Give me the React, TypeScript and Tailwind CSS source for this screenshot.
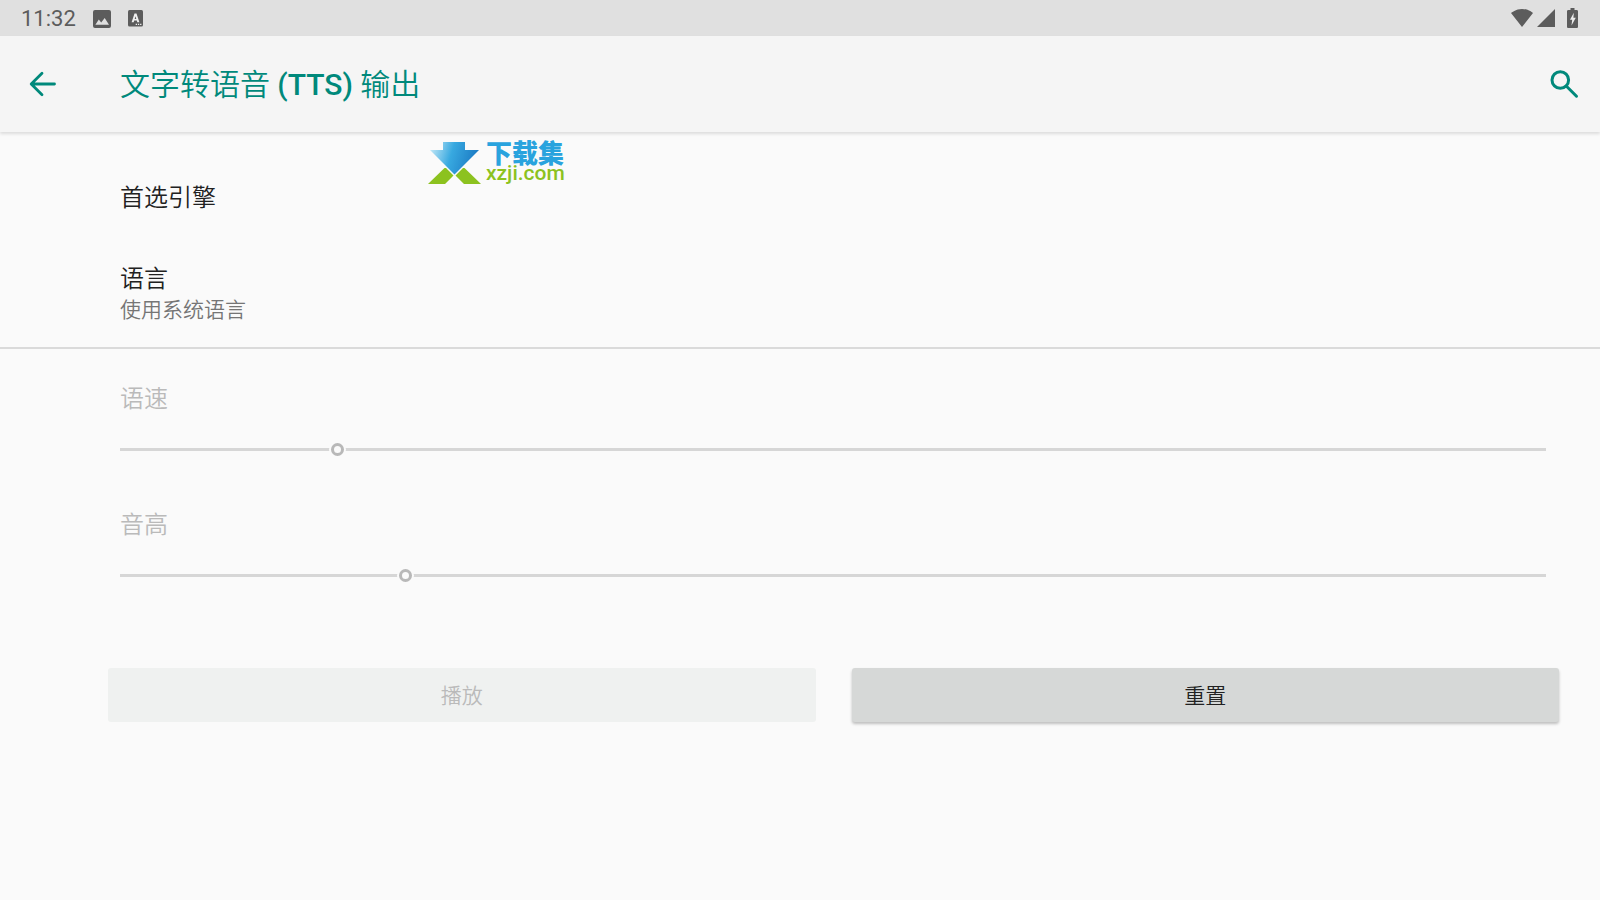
import { useState } from 'react';

type SliderRowProps = {
  id: string;
  label: string;
  value: number;
  onChange: (value: number) => void;
};

const StatusBar = () => {
  return (
    <div className="flex h-9 items-center justify-between bg-[#e0e0e0] pl-[21px] pr-[22px] text-[#5c5c5c]">
      <div className="flex items-center pt-px">
        <span className="pt-px text-[22px] leading-[34px]">11:32</span>
        <svg className="ml-[17px]" width="18" height="18" viewBox="0 0 18 18" fill="currentColor" aria-hidden="true">
          <path d="M18 16V2a2 2 0 0 0-2-2H2a2 2 0 0 0-2 2v14a2 2 0 0 0 2 2h14a2 2 0 0 0 2-2zM5.8 9.5l2.4 3.1 3.5-4.6 4.3 6.7H2.4z" />
        </svg>
        <svg className="ml-[17px]" width="15" height="17" viewBox="0 0 15 17" fill="none" aria-hidden="true">
          <rect width="15" height="16.5" rx="1.5" fill="currentColor" />
          <path
            d="M3.6 12.3 6.5 3.5h2l2.9 8.8H9.3l-.5-1.7H6.2l-.5 1.7zM6.7 9h1.6l-.8-2.7z"
            fill="#f0f0f0"
            fillRule="evenodd"
          />
          <path d="M7.7 14.3H9M9.9 14.3h1.3M12.1 14.3h1.3" stroke="#f0f0f0" strokeWidth="1.3" />
        </svg>
      </div>
      <div className="flex items-center">
        <svg width="22" height="18" viewBox="0 0 22 18" fill="currentColor" aria-hidden="true">
          <path d="M11 18 22 4.1C21.5 3.7 17.3 0 11 0S.5 3.7 0 4.1z" />
        </svg>
        <svg className="ml-1" width="18" height="18" viewBox="0 0 18 18" fill="currentColor" aria-hidden="true">
          <path d="M0 18h18V0z" />
        </svg>
        <svg className="ml-3" width="11" height="20" viewBox="0 0 11 20" aria-hidden="true">
          <path
            d="M9.7 2H7.5V0h-4v2H1.3C.6 2 0 2.6 0 3.3v15.4C0 19.4.6 20 1.3 20h8.4c.7 0 1.3-.6 1.3-1.3V3.3C11 2.6 10.4 2 9.7 2z"
            fill="currentColor"
          />
          <path d="M6.8 4.8 3 11.8h2.2l-.7 5.7 4.3-7.8H6.4z" fill="#ececec" />
        </svg>
      </div>
    </div>
  );
};

const Header = () => {
  return (
    <header className="relative z-10 flex h-24 items-center bg-[#f5f5f5] pl-7 pr-5 text-[#00897b] shadow-[0_2px_3px_rgba(0,0,0,0.12)]">
      <button type="button" aria-label="返回">
        <svg className="block" width="28" height="28" viewBox="0 0 28 28" fill="none" stroke="currentColor" strokeWidth="2.8" aria-hidden="true">
          <path d="M26.5 14H4M14 3.2 3.2 14 14 24.8" strokeLinejoin="round" strokeLinecap="round" />
        </svg>
      </button>
      <h1 className="ml-16 pt-0.5 text-[30px] font-[350] leading-10">
        文字转语音 <span className="font-medium">(TTS)</span> 输出
      </h1>
      <button type="button" aria-label="搜索" className="ml-auto">
        <svg className="block" width="30" height="30" viewBox="0 0 30 30" fill="none" stroke="currentColor" strokeWidth="3" aria-hidden="true">
          <circle cx="10.3" cy="11" r="8.3" />
          <path d="M16.5 17.2 26.5 27.2" strokeLinecap="round" />
        </svg>
      </button>
    </header>
  );
};

const Logo = () => {
  return (
    <div className="absolute left-[428px] top-[9px] flex">
      <svg width="53" height="44" viewBox="0 0 53 44" aria-hidden="true">
        <defs>
          <linearGradient id="arrow" x1="0" y1="0.2" x2="1" y2="0.4">
            <stop offset="0" stopColor="#c4e8f7" />
            <stop offset="0.45" stopColor="#38a9e0" />
            <stop offset="1" stopColor="#1a78c2" />
          </linearGradient>
        </defs>
        <path d="M15 1h22v8h14L26.5 33.5 2 9h13z" fill="url(#arrow)" />
        <path d="M0 43 16.5 27H18l7.5 7.5L17 43zM53 43 36.5 27H35l-7.5 7.5L36 43z" fill="#8cc21f" />
      </svg>
      <div className="ml-[5px]">
        <div className="text-[26px] font-black leading-[27px] text-[#29a3de]">下载集</div>
        <div className="text-[21px] font-medium leading-[10px] text-[#8cc21f]">xzji.com</div>
      </div>
    </div>
  );
};

const SliderRow = ({ id, label, value, onChange }: SliderRowProps) => {
  return (
    <div className="pb-3 pl-[120px] pr-[54px] pt-8">
      <label htmlFor={id} className="block text-[24px] leading-9 text-[#bababa]">
        {label}
      </label>
      <input
        id={id}
        type="range"
        min={0}
        max={10000}
        value={value}
        onChange={(e) => onChange(Number(e.target.value))}
        disabled
        className="mt-[19px] block h-[27px] w-full appearance-none bg-transparent [&::-webkit-slider-runnable-track]:h-[3px] [&::-webkit-slider-runnable-track]:bg-[#d6d6d6] [&::-webkit-slider-thumb]:-mt-[5px] [&::-webkit-slider-thumb]:size-[13px] [&::-webkit-slider-thumb]:appearance-none [&::-webkit-slider-thumb]:rounded-full [&::-webkit-slider-thumb]:border-[3px] [&::-webkit-slider-thumb]:border-solid [&::-webkit-slider-thumb]:border-[#b8b8b8] [&::-webkit-slider-thumb]:bg-[#fafafa] [&::-webkit-slider-thumb]:shadow-[0_0_0_2px_#fafafa]"
      />
    </div>
  );
};

const App = () => {
  const [rate, setRate] = useState(1494);
  const [pitch, setPitch] = useState(1977);

  const onReset = () => {
    setRate(1494);
    setPitch(1977);
  };

  return (
    <div className="min-h-screen bg-[#fafafa] font-[Roboto,'Noto_Sans_CJK_SC',sans-serif] text-[#212121]">
      <StatusBar />
      <Header />
      <main className="relative font-[350]">
        <Logo />
        <section className="border-b-2 border-[#dadada] pb-6 pl-[120px] pt-12">
          <div className="text-[24px] leading-9">首选引擎</div>
          <div className="mt-[45px] text-[24px] leading-9">语言</div>
          <div className="text-[21px] leading-[26px] text-[#757575]">使用系统语言</div>
        </section>
        <SliderRow id="rate" label="语速" value={rate} onChange={setRate} />
        <SliderRow id="pitch" label="音高" value={pitch} onChange={setPitch} />
        <div className="flex gap-9 pl-[108px] pr-[41px] pt-[67px] text-[21px] leading-[30px]">
          <button type="button" disabled className="flex-1 rounded-[3px] bg-[#eff1f0] pb-[11px] pt-[13px] text-[#bababa]">
            播放
          </button>
          <button
            type="button"
            onClick={onReset}
            className="flex-1 rounded-[3px] bg-[#d6d8d7] pb-[11px] pt-[13px] shadow-[0_2px_3px_rgba(0,0,0,0.24)]"
          >
            重置
          </button>
        </div>
      </main>
    </div>
  );
};

export default App;
